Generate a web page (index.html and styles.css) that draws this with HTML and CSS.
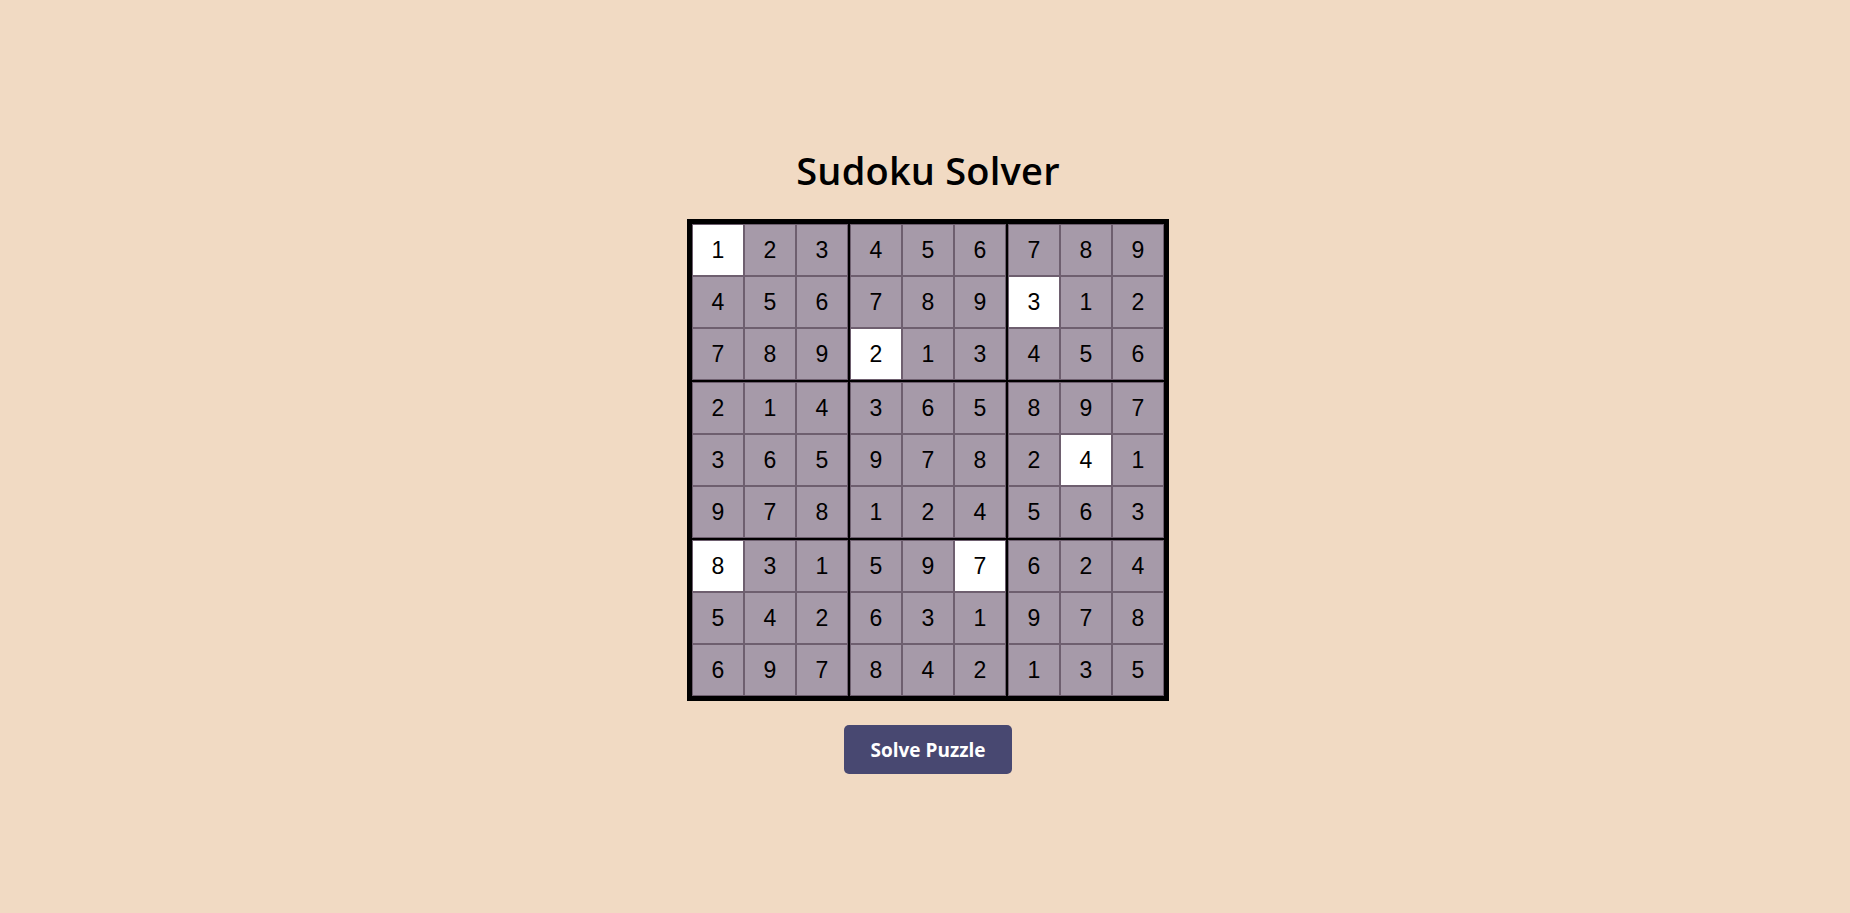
FILE: index.html
```html
<!DOCTYPE html>
<html>
<head>
<meta charset="utf-8">
<title>Sudoku Solver</title>
<link rel="stylesheet" href="styles.css">
</head>
<body>
<main class="app">
  <h1 class="title">Sudoku Solver</h1>
  <div class="board">
    <div class="block">
      <div class="cell given">1</div><div class="cell">2</div><div class="cell">3</div>
      <div class="cell">4</div><div class="cell">5</div><div class="cell">6</div>
      <div class="cell">7</div><div class="cell">8</div><div class="cell">9</div>
    </div>
    <div class="block">
      <div class="cell">4</div><div class="cell">5</div><div class="cell">6</div>
      <div class="cell">7</div><div class="cell">8</div><div class="cell">9</div>
      <div class="cell given">2</div><div class="cell">1</div><div class="cell">3</div>
    </div>
    <div class="block">
      <div class="cell">7</div><div class="cell">8</div><div class="cell">9</div>
      <div class="cell given">3</div><div class="cell">1</div><div class="cell">2</div>
      <div class="cell">4</div><div class="cell">5</div><div class="cell">6</div>
    </div>
    <div class="block">
      <div class="cell">2</div><div class="cell">1</div><div class="cell">4</div>
      <div class="cell">3</div><div class="cell">6</div><div class="cell">5</div>
      <div class="cell">9</div><div class="cell">7</div><div class="cell">8</div>
    </div>
    <div class="block">
      <div class="cell">3</div><div class="cell">6</div><div class="cell">5</div>
      <div class="cell">9</div><div class="cell">7</div><div class="cell">8</div>
      <div class="cell">1</div><div class="cell">2</div><div class="cell">4</div>
    </div>
    <div class="block">
      <div class="cell">8</div><div class="cell">9</div><div class="cell">7</div>
      <div class="cell">2</div><div class="cell given">4</div><div class="cell">1</div>
      <div class="cell">5</div><div class="cell">6</div><div class="cell">3</div>
    </div>
    <div class="block">
      <div class="cell given">8</div><div class="cell">3</div><div class="cell">1</div>
      <div class="cell">5</div><div class="cell">4</div><div class="cell">2</div>
      <div class="cell">6</div><div class="cell">9</div><div class="cell">7</div>
    </div>
    <div class="block">
      <div class="cell">5</div><div class="cell">9</div><div class="cell given">7</div>
      <div class="cell">6</div><div class="cell">3</div><div class="cell">1</div>
      <div class="cell">8</div><div class="cell">4</div><div class="cell">2</div>
    </div>
    <div class="block">
      <div class="cell">6</div><div class="cell">2</div><div class="cell">4</div>
      <div class="cell">9</div><div class="cell">7</div><div class="cell">8</div>
      <div class="cell">1</div><div class="cell">3</div><div class="cell">5</div>
    </div>
  </div>
  <button class="solve">Solve Puzzle</button>
</main>
</body>
</html>
```

FILE: styles.css
```css
html, body {
  margin: 0;
  padding: 0;
}
body {
  background: #f1dac3;
  min-height: 913px;
  font-family: "Open Sans", "Liberation Sans", sans-serif;
}
.app {
  display: flex;
  flex-direction: column;
  align-items: center;
  padding-top: 142px;
  padding-left: 6px;
}
.title {
  margin: 0 0 21px 0;
  font-size: 38px;
  line-height: 56px;
  font-weight: 600;
  color: #000;
  letter-spacing: 0.2px;
}
.board {
  display: grid;
  grid-template-columns: repeat(3, 156px);
  grid-template-rows: repeat(3, 156px);
  gap: 2px;
  background: #000;
  border: 5px solid #000;
}
.block {
  display: grid;
  grid-template-columns: repeat(3, 52px);
  grid-template-rows: repeat(3, 52px);
}
.cell {
  box-sizing: border-box;
  width: 52px;
  height: 52px;
  border: 1px solid #6e5f6f;
  background: #a69aa9;
  display: flex;
  align-items: center;
  justify-content: center;
  font-family: "Liberation Sans", Arial, sans-serif;
  font-size: 23px;
  color: #000;
}
.cell.given {
  background: #fff;
}
.solve {
  margin-top: 24px;
  width: 168px;
  height: 49px;
  border: none;
  border-radius: 5px;
  background: #484871;
  color: #fff;
  font-family: "Open Sans", "Liberation Sans", sans-serif;
  font-size: 19px;
  font-weight: 700;
  cursor: pointer;
}
```
